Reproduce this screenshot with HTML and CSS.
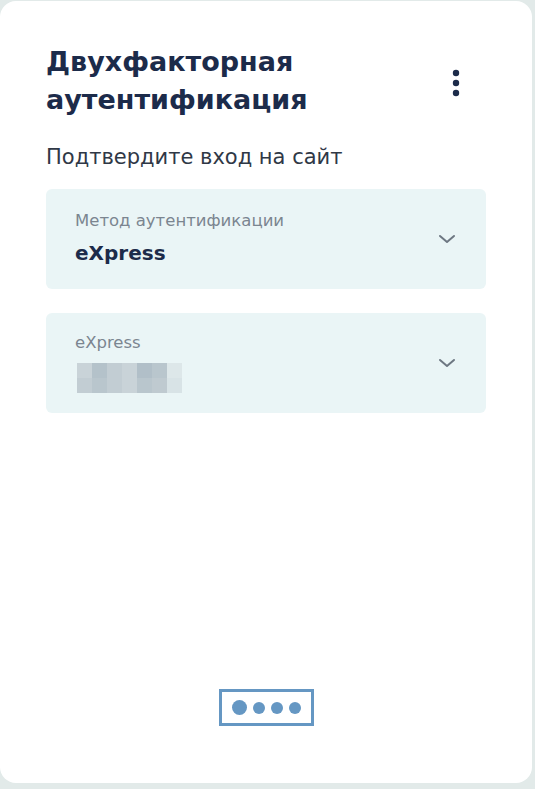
FILE: index.html
```html
<!DOCTYPE html>
<html lang="ru">
<head>
  <meta charset="UTF-8">
  <meta name="viewport" content="width=device-width, initial-scale=1.0">
  <title>Двухфакторная аутентификация</title>
  <link rel="stylesheet" href="styles.css">
</head>
<body>
  <div class="card">
    <div class="head">
      <h1 class="title">Двухфакторная аутентификация</h1>
      <a href="#" class="more" aria-label="Меню">
        <svg width="8" height="28" viewBox="0 0 8 28">
          <circle cx="4" cy="4" r="3.2"/>
          <circle cx="4" cy="14" r="3.2"/>
          <circle cx="4" cy="24" r="3.2"/>
        </svg>
      </a>
    </div>
    <p class="subtitle">Подтвердите вход на сайт</p>

    <div class="select">
      <div class="select-text">
        <div class="select-label">Метод аутентификации</div>
        <div class="select-value">eXpress</div>
      </div>
      <svg class="chevron" width="18" height="10" viewBox="0 0 18 10">
        <path d="M2 2l7 6 7-6"/>
      </svg>
    </div>

    <div class="select">
      <div class="select-text">
        <div class="select-label">eXpress</div>
        <div class="mosaic">
          <i class="m1"></i><i class="m2"></i><i class="m3"></i><i class="m1"></i><i class="m5"></i><i class="m6"></i><i class="m7"></i>
          <i class="m3"></i><i class="m6"></i><i class="m3"></i><i class="m1"></i><i class="m6"></i><i class="m4"></i><i class="m8"></i>
        </div>
      </div>
      <svg class="chevron" width="18" height="10" viewBox="0 0 18 10">
        <path d="M2 2l7 6 7-6"/>
      </svg>
    </div>

    <div class="pin">
      <span class="dot big"></span>
      <span class="dot"></span>
      <span class="dot"></span>
      <span class="dot"></span>
    </div>
  </div>
</body>
</html>
```
FILE: styles.css
```css
html,body,h1,p{margin:0;padding:0}
a{text-decoration:none}
body{
  background:#e2eae9;
  font-family:"DejaVu Sans", Verdana, sans-serif;
  color:#1c2b4a;
}
.card {
  width: 532px;
  height: 782px;
  margin-top: 1px;
  box-sizing: border-box;
  background: #fff;
  border-radius: 16px;
  padding: 42px 46px 57px 46px;
  display: flex;
  flex-direction: column;
}
.head {
  display: flex;
  align-items: center;
  justify-content: space-between;
}
.title {
  font-size: 27px;
  line-height: 38px;
  font-weight: bold;
  color: #1c2b4a;
  width: 330px;
}
.more {
  display: flex;
  margin-right: 26px;
  margin-top: 4px;
}
.more svg {
  fill: #1c2b4a;
}
.subtitle {
  margin-top: 26px;
  margin-bottom: 20px;
  font-size: 21px;
  line-height: 24px;
  color: #2f3846;
}
.select {
  height: 100px;
  box-sizing: border-box;
  background: #eaf5f6;
  border-radius: 6px;
  padding: 0 30px 0 29px;
  display: flex;
  align-items: center;
  justify-content: space-between;
}
.select + .select {
  margin-top: 24px;
}
.select-label {
  font-size: 16.5px;
  line-height: 20px;
  color: #7b8590;
}
.select-value {
  margin-top: 8px;
  font-size: 20px;
  line-height: 28px;
  font-weight: bold;
  color: #1c2b4a;
}
.chevron {
  fill: none;
  stroke: #6d7782;
  stroke-width: 2;
  stroke-linecap: round;
  stroke-linejoin: round;
}
.mosaic {
  margin-top: 10px;
  margin-left: 2px;
  display: grid;
  grid-template-columns: repeat(7, 15px);
  grid-auto-rows: 15px;
}
.mosaic .m1 { background: #c9d3d8; }
.mosaic .m2 { background: #b4c2ca; }
.mosaic .m3 { background: #c2cdd3; }
.mosaic .m4 { background: #bfcad0; }
.mosaic .m5 { background: #b1bfc8; }
.mosaic .m6 { background: #b9c6cd; }
.mosaic .m7 { background: #dde7e9; }
.mosaic .m8 { background: #d8e3e6; }
.pin {
  margin-top: auto;
  align-self: center;
  width: 95px;
  height: 37px;
  box-sizing: border-box;
  border: 3px solid #6597c3;
  display: flex;
  align-items: center;
  justify-content: center;
  gap: 6px;
  margin-left: 1px;
}
.dot {
  width: 12px;
  height: 12px;
  border-radius: 50%;
  background: #6597c3;
}
.dot.big {
  width: 15px;
  height: 15px;
}
```
